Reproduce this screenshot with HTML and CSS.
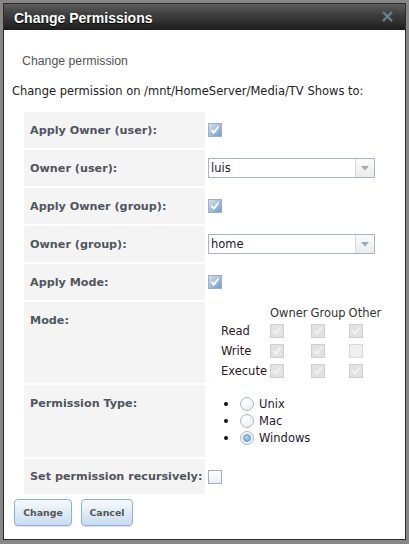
FILE: index.html
```html
<!DOCTYPE html>
<html>
<head>
<meta charset="utf-8">
<link rel="stylesheet" href="styles.css">
</head>
<body>
<div class="dialog">
  <div class="titlebar">
    <span class="title">Change Permissions</span>
    <svg class="close" width="11" height="11" viewBox="0 0 11 11">
      <path d="M1.8 1.8 L9.2 9.2 M9.2 1.8 L1.8 9.2" stroke="#4b5866" stroke-width="3" stroke-linecap="square"/>
      <path d="M1.8 1.8 L9.2 9.2 M9.2 1.8 L1.8 9.2" stroke="#7b8b9d" stroke-width="1.4" stroke-linecap="square"/>
    </svg>
  </div>
  <div class="content">
    <div class="legend">Change permission</div>
    <div class="intro">Change permission on /mnt/HomeServer/Media/TV Shows to:</div>
    <div class="form">
      <div class="lbl">Apply Owner (user):</div>
      <div class="val"><span class="cb on"><svg width="12" height="12" viewBox="0 0 12 12"><path d="M2.5 6 L5 8.5 L9.5 2.5" stroke="#fff" stroke-width="2" fill="none"/></svg></span></div>

      <div class="lbl">Owner (user):</div>
      <div class="val"><div class="select"><span class="sel-text">luis</span><span class="sel-arrow"><svg width="8" height="5" viewBox="0 0 8 5"><path d="M0 0 H8 L4 4.5 Z" fill="#9aabbd"/></svg></span></div></div>

      <div class="lbl">Apply Owner (group):</div>
      <div class="val"><span class="cb on"><svg width="12" height="12" viewBox="0 0 12 12"><path d="M2.5 6 L5 8.5 L9.5 2.5" stroke="#fff" stroke-width="2" fill="none"/></svg></span></div>

      <div class="lbl">Owner (group):</div>
      <div class="val"><div class="select"><span class="sel-text">home</span><span class="sel-arrow"><svg width="8" height="5" viewBox="0 0 8 5"><path d="M0 0 H8 L4 4.5 Z" fill="#9aabbd"/></svg></span></div></div>

      <div class="lbl">Apply Mode:</div>
      <div class="val"><span class="cb on"><svg width="12" height="12" viewBox="0 0 12 12"><path d="M2.5 6 L5 8.5 L9.5 2.5" stroke="#fff" stroke-width="2" fill="none"/></svg></span></div>

      <div class="lbl top mode-row">Mode:</div>
      <div class="val top mode-val">
        <div class="perm">
          <span></span><span>Owner</span><span>Group</span><span>Other</span>
          <span class="rl">Read</span>
          <span class="cb dis on"><svg width="12" height="12" viewBox="0 0 12 12"><path d="M2.5 6 L5 8.5 L9.5 2.5" stroke="#f2f2f2" stroke-width="2" fill="none"/></svg></span>
          <span class="cb dis on"><svg width="12" height="12" viewBox="0 0 12 12"><path d="M2.5 6 L5 8.5 L9.5 2.5" stroke="#f2f2f2" stroke-width="2" fill="none"/></svg></span>
          <span class="cb dis on"><svg width="12" height="12" viewBox="0 0 12 12"><path d="M2.5 6 L5 8.5 L9.5 2.5" stroke="#f2f2f2" stroke-width="2" fill="none"/></svg></span>
          <span class="rl">Write</span>
          <span class="cb dis on"><svg width="12" height="12" viewBox="0 0 12 12"><path d="M2.5 6 L5 8.5 L9.5 2.5" stroke="#f2f2f2" stroke-width="2" fill="none"/></svg></span>
          <span class="cb dis on"><svg width="12" height="12" viewBox="0 0 12 12"><path d="M2.5 6 L5 8.5 L9.5 2.5" stroke="#f2f2f2" stroke-width="2" fill="none"/></svg></span>
          <span class="cb dis"></span>
          <span class="rl">Execute</span>
          <span class="cb dis on"><svg width="12" height="12" viewBox="0 0 12 12"><path d="M2.5 6 L5 8.5 L9.5 2.5" stroke="#f2f2f2" stroke-width="2" fill="none"/></svg></span>
          <span class="cb dis on"><svg width="12" height="12" viewBox="0 0 12 12"><path d="M2.5 6 L5 8.5 L9.5 2.5" stroke="#f2f2f2" stroke-width="2" fill="none"/></svg></span>
          <span class="cb dis on"><svg width="12" height="12" viewBox="0 0 12 12"><path d="M2.5 6 L5 8.5 L9.5 2.5" stroke="#f2f2f2" stroke-width="2" fill="none"/></svg></span>
        </div>
      </div>

      <div class="lbl top type-row">Permission Type:</div>
      <div class="val top type-val">
        <ul class="radios">
          <li><span class="radio"></span><span>Unix</span></li>
          <li><span class="radio"></span><span>Mac</span></li>
          <li><span class="radio on"></span><span>Windows</span></li>
        </ul>
      </div>

      <div class="lbl rec-row">Set permission recursively:</div>
      <div class="val"><span class="cb off"></span></div>
    </div>
    <div class="actions">
      <button class="btn btn-change">Change</button>
      <button class="btn btn-cancel">Cancel</button>
    </div>
  </div>
</div>
</body>
</html>
```
FILE: styles.css
```css
* { box-sizing: border-box; }
html, body { margin: 0; padding: 0; }
body {
  background: #878787;
  width: 409px;
  height: 544px;
  overflow: hidden;
  padding: 3px 3px 0 3px;
  font-family: "DejaVu Sans", Verdana, sans-serif;
}
.dialog {
  width: 403px;
  height: 537px;
  border: 1px solid #2c2c2c;
  background: #fff;
  display: flex;
  flex-direction: column;
}
.titlebar {
  height: 26px;
  background: linear-gradient(#5c5c5c, #3c3c3c 45%, #1e1e1e);
  display: flex;
  align-items: center;
  justify-content: space-between;
  padding: 0 12px 0 10px;
}
.title {
  font-family: "Liberation Sans", Arial, sans-serif;
  font-weight: bold;
  font-size: 14px;
  color: #fff;
  text-shadow: 0 1px 1px #000;
  padding-top: 1px;
}
.close { display: block; margin-top: -2px; }
.content {
  flex: 1;
  padding: 0 0 0 8px;
}
.legend {
  font-family: "Liberation Sans", Arial, sans-serif;
  font-size: 12.3px;
  color: #555;
  line-height: 14px;
  margin-top: 24px;
  padding-left: 10px;
}
.intro {
  font-size: 11.5px;
  line-height: 14px;
  color: #222;
  margin-top: 16px;
}
.form {
  display: grid;
  grid-template-columns: 181px 1fr;
  gap: 2px;
  margin: 14px 14px 0 12px;
}
.lbl {
  background: #f4f4f4;
  height: 36px;
  display: flex;
  align-items: center;
  padding-left: 6px;
  font-weight: bold;
  font-size: 11.2px;
  color: #50555e;
}
.lbl.top { align-items: flex-start; padding-top: 12px; }
.mode-row { height: 81px; }
.type-row { height: 72px; }
.rec-row { height: 35px; padding-left: 6px; }
.val {
  display: flex;
  align-items: center;
  padding-left: 1px;
}
.val.top { align-items: flex-start; }
.cb {
  width: 14px;
  height: 14px;
  border: 1px solid #a3adbd;
  display: inline-flex;
  align-items: center;
  justify-content: center;
}
.cb.on { background: linear-gradient(135deg, #d3e3f3 0%, #9fc0e0 50%, #6f9dcb 100%); }
.cb.off { background: linear-gradient(#ffffff, #e9eef5); }
.cb.dis { background: #e2e2e2; border-color: #cfcfcf; }
.cb.dis:not(.on) { background: #efefef; border-color: #d8d8d8; }
.cb svg { display: block; }
.select {
  width: 167px;
  height: 20px;
  border: 1px solid #aab3c3;
  display: flex;
  align-items: stretch;
  background: #fff;
}
.sel-text {
  flex: 1;
  font-size: 11.5px;
  color: #2a1530;
  line-height: 18px;
  padding-left: 2px;
}
.sel-arrow {
  width: 19px;
  border-left: 1px solid #d4d9e0;
  background: linear-gradient(#fafafa, #ececec);
  display: flex;
  align-items: center;
  justify-content: center;
}
.mode-val { padding-top: 3px; padding-left: 14px; }
.perm {
  display: grid;
  grid-template-columns: auto auto auto auto;
  grid-template-rows: 16px 20px 20px 20px;
  column-gap: 3px;
  align-items: center;
  justify-items: start;
  font-size: 11.5px;
  color: #333;
}
.perm .rl { color: #2a1a22; }
.type-val { padding-top: 10px; padding-left: 17px; }
.radios {
  list-style: none;
  margin: 0;
  padding: 0;
  font-size: 11.5px;
  color: #2a1530;
}
.radios li {
  display: flex;
  align-items: center;
  height: 17px;
}
.radios li::before {
  content: "";
  width: 4px;
  height: 4px;
  border-radius: 50%;
  background: #111;
  margin-right: 12px;
}
.radio {
  width: 14px;
  height: 14px;
  border-radius: 50%;
  border: 1px solid #adb9c6;
  background: radial-gradient(circle at 40% 35%, #ffffff, #e3eaf1);
  margin-right: 5px;
  display: inline-flex;
  align-items: center;
  justify-content: center;
}
.radio.on::after {
  content: "";
  width: 8px;
  height: 8px;
  border-radius: 50%;
  background: radial-gradient(circle at 40% 35%, #b5d2ee, #6f9fcf);
  border: 1px solid #6a98c8;
  box-sizing: border-box;
}
.actions {
  display: flex;
  gap: 9px;
  margin: 5px 0 0 2px;
}
.btn {
  height: 27px;
  padding: 0;
  border: 1px solid #8eb0d6;
  border-radius: 4px;
  background: linear-gradient(#f7fafd, #dbe8f6 60%, #c9dcf1);
  font-family: "DejaVu Sans", Verdana, sans-serif;
  font-weight: bold;
  font-size: 9.4px;
  color: #555;
  box-shadow: 0 1px 1px rgba(0,0,0,0.12);
}
.btn-change { width: 58px; }
.btn-cancel { width: 52px; }
```
